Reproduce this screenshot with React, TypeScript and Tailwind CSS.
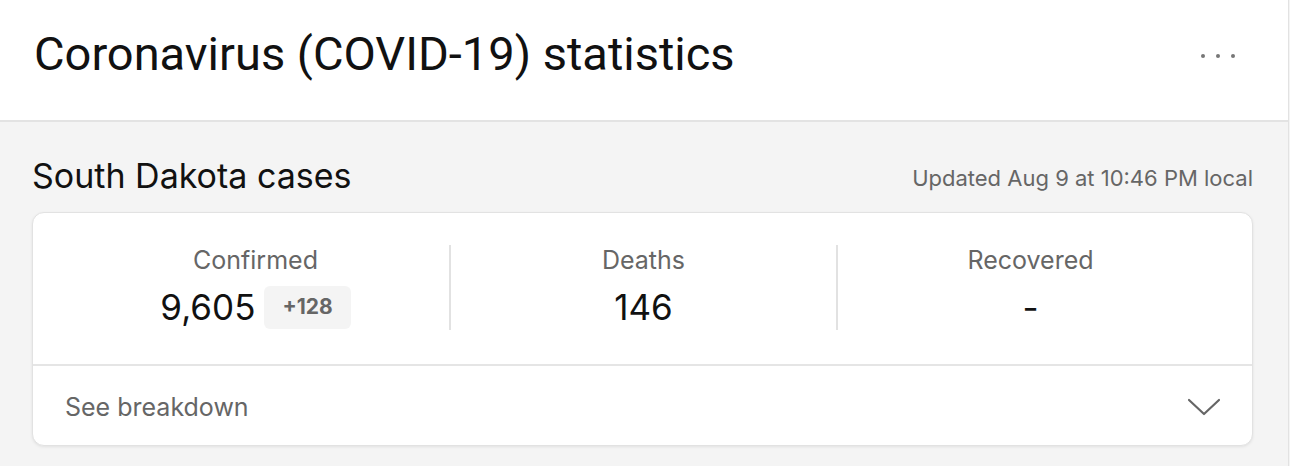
import React from 'react';

const stats = [
  { label: 'Confirmed', value: '9,605', delta: '+128' },
  { label: 'Deaths', value: '146' },
  { label: 'Recovered', value: '-' },
];

export default function App() {
  return (
    <div className="w-[1290px] h-[466px] bg-[#f4f4f4] overflow-hidden" style={{ fontFamily: 'Inter, Roboto, sans-serif' }}>
      <div className="w-[1289px] h-full border-r border-[#e2e2e2] flex flex-col">
        {/* Header */}
        <div className="h-[122px] shrink-0 bg-white border-b-2 border-[#e3e3e3] flex items-start justify-between pl-[34px] pr-[53px] pt-[26px]">
          <h1 className="text-[47px] leading-[56px] text-[#111]" style={{ fontFamily: 'Roboto, sans-serif' }}>
            Coronavirus (COVID-19) statistics
          </h1>
          <div className="flex items-center gap-[11px] mt-[28px]">
            <span className="w-[4px] h-[4px] rounded-full bg-[#777]" />
            <span className="w-[4px] h-[4px] rounded-full bg-[#777]" />
            <span className="w-[4px] h-[4px] rounded-full bg-[#777]" />
          </div>
        </div>

        {/* Region section */}
        <div className="flex-1 bg-[#f4f4f4] pl-[32px] pr-[35px] pt-[34px]">
          <div className="flex items-end justify-between">
            <h2 className="text-[34px] leading-[40px] text-[#111]">South Dakota cases</h2>
            <span className="text-[22px] leading-[26px] text-[#666] mb-[5px]">Updated Aug 9 at 10:46 PM local</span>
          </div>

          <div className="mt-[16px] bg-white border border-[#e2e2e2] rounded-[12px] shadow-[0_1px_3px_rgba(0,0,0,0.08)]">
            <div className="grid grid-cols-3 px-[29px] pt-[32px] pb-[34px]">
              {stats.map((s, i) => (
                <div key={s.label} className={`h-[85px] flex flex-col items-center ${i > 0 ? 'border-l-2 border-[#e2e2e2]' : ''}`}>
                  <span className="text-[25px] leading-[30px] text-[#666]">{s.label}</span>
                  <div className="flex items-center gap-[9px] mt-[10px]">
                    <span className="text-[35px] leading-[44px] text-[#111]">{s.value}</span>
                    {s.delta && (
                      <span className="h-[43px] px-[18px] flex items-center rounded-[6px] bg-[#f4f4f4] text-[21px] font-bold text-[#666]">
                        {s.delta}
                      </span>
                    )}
                  </div>
                </div>
              ))}
            </div>
            <div className="border-t-2 border-[#e5e5e5] h-[81px] flex items-center justify-between pl-[32px] pr-[31px]">
              <span className="text-[25px] text-[#666] mt-[4px]">See breakdown</span>
              <svg width="34" height="20" viewBox="0 0 34 20" fill="none" className="mt-[3px]">
                <path d="M2 3 L17 17 L32 3" stroke="#666" strokeWidth="2.2" strokeLinecap="round" strokeLinejoin="round" />
              </svg>
            </div>
          </div>
        </div>
      </div>
    </div>
  );
}
